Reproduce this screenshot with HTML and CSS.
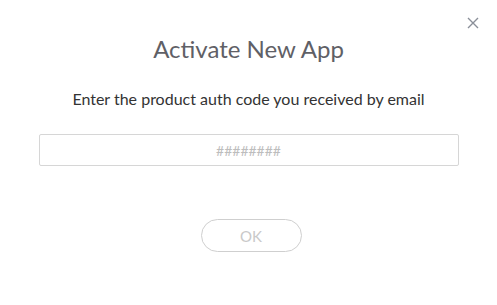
FILE: index.html
```html
<!DOCTYPE html>
<html>
<head>
<meta charset="utf-8">
<link rel="stylesheet" href="styles.css">
</head>
<body>
<div class="dialog">
  <button class="close" aria-label="Close">
    <svg width="12" height="12" viewBox="0 0 12 12"><path d="M1 1L11 11M11 1L1 11" stroke="#8a8f99" stroke-width="1.4" fill="none"/></svg>
  </button>
  <h1 class="title">Activate New App</h1>
  <p class="subtitle">Enter the product auth code you received by email</p>
  <input class="code" type="text" placeholder="########">
  <button class="ok">OK</button>
</div>
</body>
</html>
```
FILE: styles.css
```css
html, body {
  margin: 0;
  padding: 0;
  background: #fff;
}
.dialog {
  position: relative;
  width: 497px;
  height: 305px;
  display: flex;
  flex-direction: column;
  align-items: center;
  font-family: Lato, "Open Sans", sans-serif;
  box-sizing: border-box;
  padding-top: 34px;
}
.close {
  position: absolute;
  top: 17px;
  right: 18px;
  border: 0;
  background: none;
  padding: 0;
  width: 12px;
  height: 12px;
  display: flex;
}
.title {
  margin: 0;
  font-size: 24px;
  font-weight: 400;
  color: #5f6066;
  line-height: 30px;
}
.subtitle {
  margin: 25px 0 0 0;
  font-size: 16px;
  color: #333;
  line-height: 20px;
}
.code {
  margin-top: 25px;
  width: 420px;
  height: 32px;
  box-sizing: border-box;
  border: 1px solid #d6d6d6;
  border-radius: 2px;
  text-align: center;
  font-family: Lato, sans-serif;
  font-size: 14px;
  color: #333;
  outline: none;
}
.code::placeholder {
  color: #bdbdbd;
}
.ok {
  margin-top: 53px;
  margin-left: 5px;
  width: 101px;
  height: 33px;
  border: 1px solid #cfcfcf;
  border-radius: 17px;
  background: #fff;
  color: #c9c9c9;
  font-family: Lato, sans-serif;
  font-size: 15px;
  padding: 0;
}
```
